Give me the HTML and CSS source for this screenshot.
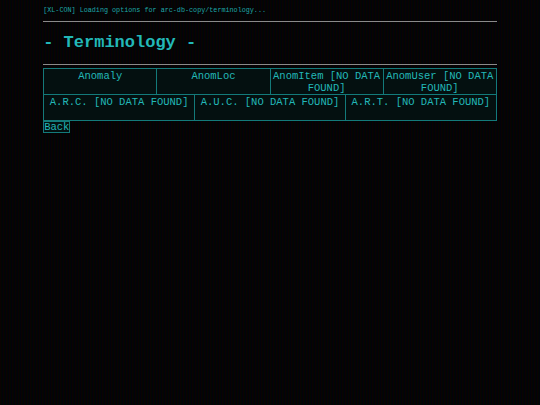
FILE: index.html
```html
<!DOCTYPE html>
<html>
<head>
<meta charset="utf-8">
<link rel="stylesheet" href="styles.css">
</head>
<body>
<div class="wrap">
  <p class="log">[XL-CON] Loading options for arc-db-copy/terminology...</p>
  <hr class="rule">
  <h1 class="title">- Terminology -</h1>
  <hr class="rule">
  <div class="table">
    <div class="row">
      <div class="cell">Anomaly</div>
      <div class="cell">AnomLoc</div>
      <div class="cell">AnomItem [NO DATA FOUND]</div>
      <div class="cell">AnomUser [NO DATA FOUND]</div>
    </div>
    <div class="row">
      <div class="cell">A.R.C. [NO DATA FOUND]</div>
      <div class="cell">A.U.C. [NO DATA FOUND]</div>
      <div class="cell">A.R.T. [NO DATA FOUND]</div>
    </div>
  </div>
  <button class="back">Back</button>
</div>
</body>
</html>
```
FILE: styles.css
```css
html, body {
  margin: 0;
  padding: 0;
  height: 100%;
}
body {
  background-color: #020202;
  background-image: repeating-linear-gradient(90deg,
    rgba(255, 0, 0, 0.035) 0px, rgba(255, 0, 0, 0.035) 1px,
    rgba(0, 255, 0, 0.02) 1px, rgba(0, 255, 0, 0.02) 2px,
    rgba(0, 0, 255, 0.035) 2px, rgba(0, 0, 255, 0.035) 3px);
  color: #22b8b8;
  font-family: "Liberation Mono", "DejaVu Sans Mono", monospace;
}
.wrap {
  width: 84%;
  margin: 0 auto;
  padding-top: 6px;
}
.log {
  margin: 0;
  font-size: 6.75px;
  line-height: 8px;
  color: #1fa8a8;
}
.rule {
  border: 0;
  border-top: 1px solid #8a8a8a;
  margin: 7px 0 0 0;
  height: 0;
}
.title {
  margin: 11px 0 11px 0;
  font-size: 17px;
  line-height: 20px;
  font-weight: bold;
  color: #22b8b8;
}
.table {
  margin-top: 3px;
  border: 1px solid #137a7a;
  border-bottom: 0;
}
.row {
  display: flex;
  border-bottom: 1px solid #137a7a;
}
.cell {
  flex: 1 1 0;
  min-height: 24px;
  padding: 1px 1px 0 1px;
  font-size: 10.5px;
  line-height: 12px;
  text-align: center;
  background: #041010;
  color: #22b8b8;
}
.cell + .cell {
  border-left: 1px solid #137a7a;
}
.back {
  display: block;
  margin: 0;
  padding: 0;
  border: 1px solid #137a7a;
  background: #041010;
  color: #22b8b8;
  font-family: "Liberation Mono", "DejaVu Sans Mono", monospace;
  font-size: 10.5px;
  line-height: 10px;
  height: 12px;
}
```
